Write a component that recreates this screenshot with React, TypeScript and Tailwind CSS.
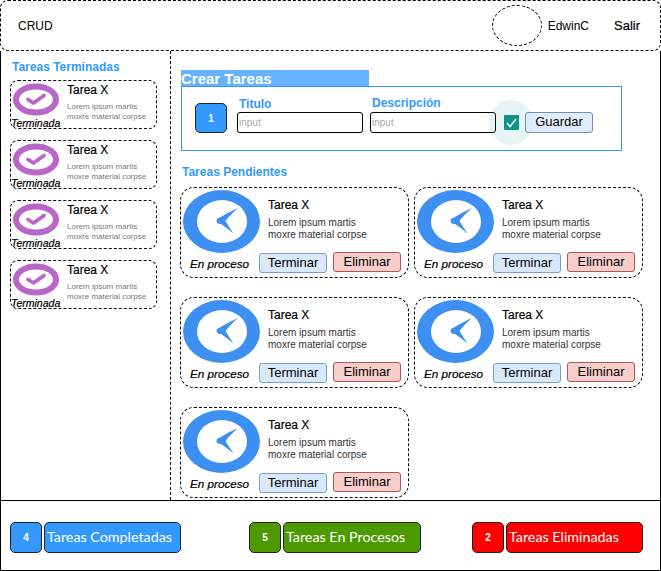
const sans = { fontFamily: '"Liberation Sans", Arial, sans-serif' };

function CheckIcon() {
  return (
    <svg width="46" height="33" viewBox="0 0 46 33" className="shrink-0">
      <ellipse cx="23" cy="16.5" rx="20" ry="13" fill="white" stroke="#B966C9" strokeWidth="6" />
      <path d="M15 16.5 L20.5 20 L31 12.5" fill="none" stroke="#B966C9" strokeWidth="3.8" strokeLinecap="round" strokeLinejoin="round" />
    </svg>
  );
}

function ClockIcon() {
  return (
    <svg width="77" height="63" viewBox="0 0 77 63" className="shrink-0">
      <ellipse cx="38.5" cy="31.5" rx="38.5" ry="31.5" fill="#3D8FF2" />
      <ellipse cx="39" cy="31.5" rx="25" ry="21.5" fill="white" />
      <path d="M55 18 Q44 23 37 27.5 Q33.5 28 33.5 31 Q34 34.5 38 34 Q44 38 50.5 43.5 Q46 37 42.5 31 Q47 25 55 18 Z" fill="#3D8FF2" />
    </svg>
  );
}

function DoneCard() {
  return (
    <div className="relative h-[49px] w-[147px] rounded-lg border border-dashed border-black">
      <div className="flex pl-[2px] pt-[2px]">
        <CheckIcon />
        <div className="ml-[8px] flex flex-col">
          <span className="text-[12px] leading-[14px] text-black [-webkit-text-stroke:0.2px_black]">Tarea X</span>
          <span className="mt-[5px] text-[8px] leading-[10px] text-[#777]">Lorem ipsum martis<br />moxre material corpse</span>
        </div>
      </div>
      <span className="absolute bottom-[-1px] left-0 text-[10.5px] italic leading-[12px] text-black [-webkit-text-stroke:0.2px_black]">Terminada</span>
    </div>
  );
}

function TaskCard() {
  return (
    <div className="h-[91px] w-[229px] rounded-[14px] border border-dashed border-black pl-[2px] pt-[2px]">
      <div className="flex h-[63px]">
        <ClockIcon />
        <div className="ml-[8px] flex flex-col pt-[8px]">
          <span className="text-[12px] leading-[14px] text-black [-webkit-text-stroke:0.2px_black]">Tarea X</span>
          <span className="mt-[5px] text-[10px] leading-[12px] text-[#333]">Lorem ipsum martis<br />moxre material corpse</span>
        </div>
      </div>
      <div className="relative flex items-start">
        <span className="ml-[7px] w-[69px] pt-[4px] text-[11.7px] italic leading-[13px] text-black [-webkit-text-stroke:0.2px_black]">En proceso</span>
        <span className="flex h-[20px] w-[68px] items-center justify-center rounded-[3px] border border-[#7b9ec9] bg-[#DAE8FC] text-[13px] text-black">Terminar</span>
        <span className="ml-[6px] flex h-[20px] w-[68px] -translate-y-px items-center justify-center rounded-[3px] border border-[#b85450] bg-[#F8CECC] text-[13px] text-black">Eliminar</span>
      </div>
    </div>
  );
}

function Stat({ n, label, color, w }: { n: string; label: string; color: string; w: string }) {
  return (
    <div className={`flex gap-[2px] ${w}`}>
      <span className={`flex h-[31px] w-[32px] shrink-0 items-center justify-center rounded-[5px] border border-[#222] text-[10px] font-bold text-white ${color}`}>{n}</span>
      <span className={`flex h-[31px] min-w-0 flex-1 items-center whitespace-nowrap rounded-[5px] border border-[#222] pb-[2px] pl-[2px] text-[14.3px] text-white ${color}`} style={{ fontFamily: 'Lato, sans-serif' }}>{label}</span>
    </div>
  );
}

export default function App() {
  return (
    <div className="flex h-[571px] w-[661px] flex-col overflow-hidden bg-white text-black" style={sans}>
      <header className="flex h-[51px] shrink-0 items-center rounded-lg border border-dashed border-black pl-[17px]">
        <span className="text-[12px]">CRUD</span>
        <span className="ml-auto h-[41px] w-[50px] rounded-[50%] border border-dashed border-black" />
        <span className="ml-[6px] text-[12px]">EdwinC</span>
        <span className="ml-[25px] mr-[20px] text-[13px] [-webkit-text-stroke:0.2px_black]">Salir</span>
      </header>
      <div className="flex h-[449px] shrink-0 border-l border-r border-l-black border-r-black">
        <aside className="h-full w-[170px] shrink-0 border-r border-dashed border-black pl-[9px]">
          <h2 className="mt-[9px] pl-[2px] text-[12px] font-bold leading-[14px] text-[#3399FF]">Tareas Terminadas</h2>
          <div className="mt-[6px] flex flex-col gap-[11px]">
            <DoneCard />
            <DoneCard />
            <DoneCard />
            <DoneCard />
          </div>
        </aside>
        <main className="flex-1 pl-[10px] pt-[19px]">
          <div className="h-[16px] w-[188px] bg-[#66B2FF] text-[15px] font-bold leading-[18px] text-white">Crear Tareas</div>
          <div className="flex h-[65px] w-[441px] items-start border border-[#3399FF] pl-[13px]">
            <span className="mt-[16px] flex h-[30px] w-[32px] items-center justify-center rounded-[5px] border border-[#222] bg-[#3399FF] text-[10px] font-bold text-white">1</span>
            <div className="ml-[10px] flex w-[126px] flex-col">
              <span className="ml-[2px] mt-[9px] text-[12px] font-bold leading-[16px] text-[#3399FF]">Titulo</span>
              <span className="flex h-[21px] items-center rounded-[3px] border border-black pl-px text-[10px] text-[#aaa]">input</span>
            </div>
            <div className="ml-[7px] flex w-[126px] flex-col">
              <span className="ml-[2px] mt-[8px] text-[12px] font-bold leading-[17px] text-[#3399FF]">Descripción</span>
              <span className="flex h-[21px] items-center rounded-[3px] border border-black pl-px text-[10px] text-[#aaa]">input</span>
            </div>
            <span className="relative ml-[8px] mt-[28px] flex h-[15px] w-[15px] items-center justify-center rounded-[1px] bg-[#0E9688]">
              <span className="absolute left-[-15px] top-[-15px] h-[45px] w-[44px] rounded-full bg-[#0E9688]/10" />
              <svg width="13" height="13" viewBox="0 0 13 13" className="relative">
                <path d="M2 7 L5 10.5 L11 3" fill="none" stroke="white" strokeWidth="1.5" />
              </svg>
            </span>
            <span className="relative ml-[6px] mt-[25px] flex h-[21px] w-[68px] items-center justify-center rounded-[3px] border border-[#6c8ebf] bg-[#DAE8FC]/80 pb-[2px] text-[13px] text-black">Guardar</span>
          </div>
          <h2 className="ml-px mt-[14px] text-[12px] font-bold leading-[14px] text-[#3399FF]">Tareas Pendientes</h2>
          <div className="ml-[-1px] grid grid-cols-[229px_229px] gap-x-[5px] gap-y-[19px] pt-[8px]">
            <TaskCard />
            <TaskCard />
            <TaskCard />
            <TaskCard />
            <TaskCard />
          </div>
        </main>
      </div>
      <footer className="flex h-[71px] shrink-0 items-start border border-black pl-[9px] pt-[21px]">
        <Stat n="4" label="Tareas Completadas" color="bg-[#3399FF]" w="w-[171px]" />
        <div className="ml-[68px]">
          <Stat n="5" label="Tareas En Procesos" color="bg-[#4D9900]" w="w-[172px]" />
        </div>
        <div className="ml-[51px]">
          <Stat n="2" label="Tareas Eliminadas" color="bg-[#FF0000]" w="w-[171px]" />
        </div>
      </footer>
    </div>
  );
}
